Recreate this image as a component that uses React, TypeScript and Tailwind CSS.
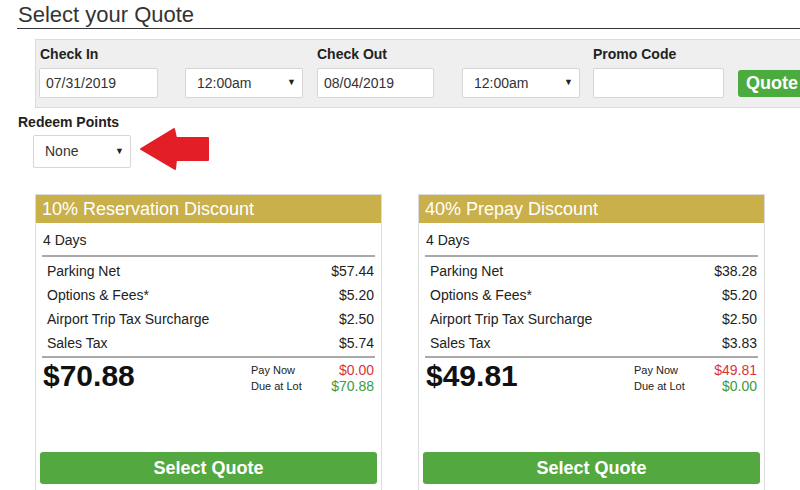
import React from 'react';

type Quote = {
  title: string;
  days: string;
  rows: [string, string][];
  total: string;
  payNow: string;
  dueAtLot: string;
};

const quotes: Quote[] = [
  {
    title: '10% Reservation Discount',
    days: '4 Days',
    rows: [
      ['Parking Net', '$57.44'],
      ['Options & Fees*', '$5.20'],
      ['Airport Trip Tax Surcharge', '$2.50'],
      ['Sales Tax', '$5.74'],
    ],
    total: '$70.88',
    payNow: '$0.00',
    dueAtLot: '$70.88',
  },
  {
    title: '40% Prepay Discount',
    days: '4 Days',
    rows: [
      ['Parking Net', '$38.28'],
      ['Options & Fees*', '$5.20'],
      ['Airport Trip Tax Surcharge', '$2.50'],
      ['Sales Tax', '$3.83'],
    ],
    total: '$49.81',
    payNow: '$49.81',
    dueAtLot: '$0.00',
  },
];

function TextBox({ value, width }: { value: string; width: string }) {
  return (
    <div className={`${width} h-[30px] bg-white border border-[#d6d6d6] rounded-[2px] flex items-center pl-[6px] text-[14px] text-[#333]`}>
      {value}
    </div>
  );
}

function SelectBox({ value, width, height = 'h-[30px]' }: { value: string; width: string; height?: string }) {
  return (
    <div className={`${width} ${height} bg-white border border-[#d6d6d6] rounded-[2px] flex items-center justify-between pl-[11px] pr-[6px] text-[14px] text-[#333]`}>
      <span>{value}</span>
      <span className="text-[9px] text-[#222]">▼</span>
    </div>
  );
}

// red pointer next to the points dropdown
function Arrow() {
  return (
    <svg width="71" height="44" viewBox="-1 -1 71 44" className="ml-[8px] -mt-[8px] -mb-[3px]">
      <polygon
        points="1,21 34,1 36,10 68,10 68,32 36,32 35,41"
        fill="#e31e26"
        stroke="#e31e26"
        strokeWidth="2"
        strokeLinejoin="round"
      />
    </svg>
  );
}

function QuoteCard({ quote }: { quote: Quote }) {
  return (
    <div className="w-[347px] h-[320px] border border-[#dcdcdc] flex flex-col">
      <div className="h-[28px] bg-[#c9b04b] text-white text-[18px] leading-[28px] pl-[6px]">
        {quote.title}
      </div>
      <div className="px-[6px] pt-[7px]">
        <div className="text-[14px] leading-[20px] text-[#222] pl-[1px]">{quote.days}</div>
        <div className="mt-[5px] h-[2px] bg-[#a9a9a9]" />
        <div className="pl-[5px] pr-[1px] pt-[2px]">
          {quote.rows.map(([label, value]) => (
            <div key={label} className="flex justify-between h-[24px] items-center text-[14px] text-[#222]">
              <span>{label}</span>
              <span>{value}</span>
            </div>
          ))}
        </div>
        <div className="mt-[1px] h-[2px] bg-[#a9a9a9]" />
        <div className="flex">
          <div className="text-[30px] font-bold leading-[36px] text-[#111] pl-[1px]">{quote.total}</div>
          <div className="ml-auto w-[124px] pt-[4px] pr-[1px]">
            <div className="flex justify-between items-center h-[16px]">
              <span className="text-[11px] text-[#222]">Pay Now</span>
              <span className="text-[14px] text-[#d8343a]">{quote.payNow}</span>
            </div>
            <div className="flex justify-between items-center h-[16px]">
              <span className="text-[11px] text-[#222]">Due at Lot</span>
              <span className="text-[14px] text-[#3c9a3c]">{quote.dueAtLot}</span>
            </div>
          </div>
        </div>
      </div>
      <button className="mt-[58px] mx-[4px] h-[32px] bg-[#53a93f] rounded-[3px] text-white font-bold text-[18px]">
        Select Quote
      </button>
    </div>
  );
}

export default function App() {
  return (
    <div className="w-[800px] h-[490px] overflow-hidden bg-white font-['Liberation_Sans',Arial,sans-serif]">
      <div className="ml-[17px] pt-[2px] border-b-[1.5px] border-[#333]">
        <h1 className="text-[22px] leading-[26px] text-[#333] pl-[1px]">Select your Quote</h1>
      </div>

      <div className="mt-[10px] ml-[35px] w-[800px] h-[69px] bg-[#efefef] border border-[#dcdcdc] flex items-end pl-[3px] pb-[9px]">
        <div className="flex flex-col">
          <label className="text-[14px] font-bold leading-[20px] text-[#222] pl-[1px] mb-[4px]">Check In</label>
          <TextBox value="07/31/2019" width="w-[119px]" />
        </div>
        <div className="ml-[27px]">
          <SelectBox value="12:00am" width="w-[118px]" />
        </div>
        <div className="flex flex-col ml-[14px]">
          <label className="text-[14px] font-bold leading-[20px] text-[#222] mb-[4px]">Check Out</label>
          <TextBox value="08/04/2019" width="w-[117px]" />
        </div>
        <div className="ml-[28px]">
          <SelectBox value="12:00am" width="w-[118px]" />
        </div>
        <div className="flex flex-col ml-[13px]">
          <label className="text-[14px] font-bold leading-[20px] text-[#222] mb-[4px]">Promo Code</label>
          <TextBox value="" width="w-[131px]" />
        </div>
        <button className="ml-[14px] mb-[1px] h-[27px] px-[8px] bg-[#4cab3f] rounded-[3px] text-white font-bold text-[18px]">
          Quote
        </button>
      </div>

      <div className="mt-[4px] ml-[18px] text-[14px] font-bold leading-[20px] text-[#222]">Redeem Points</div>
      <div className="mt-[3px] ml-[33px] flex items-start">
        <SelectBox value="None" width="w-[98px]" height="h-[33px]" />
        <Arrow />
      </div>

      <div className="mt-[26px] ml-[35px] flex gap-[36px]">
        {quotes.map((q) => (
          <QuoteCard key={q.title} quote={q} />
        ))}
      </div>
    </div>
  );
}
